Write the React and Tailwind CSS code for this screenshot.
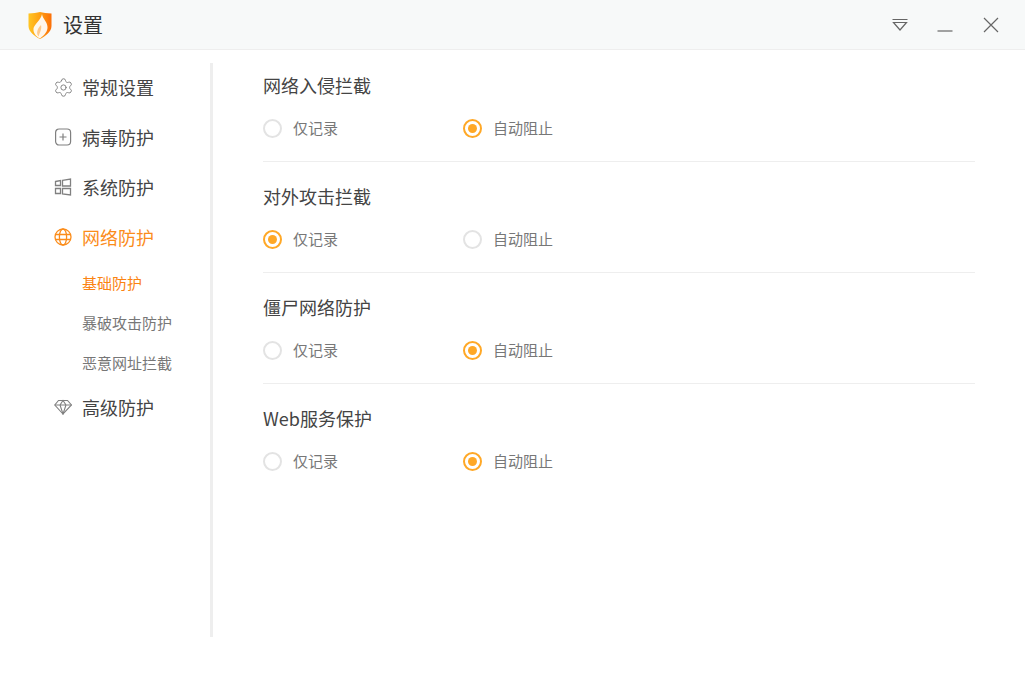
import { Settings } from "lucide-react";

const sections = [
  { title: "网络入侵拦截", value: "block" },
  { title: "对外攻击拦截", value: "log" },
  { title: "僵尸网络防护", value: "block" },
  { title: "Web服务保护", value: "block" },
];

function Logo() {
  return (
    <svg width="24" height="28" viewBox="0 0 24 28">
      <defs>
        <linearGradient id="shield" x1="0" y1="0" x2="1" y2="0">
          <stop offset="0" stopColor="#ffc625" />
          <stop offset="0.5" stopColor="#ff9f12" />
          <stop offset="1" stopColor="#fb6f08" />
        </linearGradient>
      </defs>
      <path d="M0.500 2.500 C5 2.500 9 1.500 12 1 C15 1.500 19 2.500 23.500 2.500 V15 C23.500 21 17 25.500 12 28 C7 25.500 0.500 21 0.500 15 Z" fill="url(#shield)" />
      <path d="M14 3 C14.500 8 20 11 19.500 17 C19 22 15 25 12 27.500 C8 25.500 5 22 5.500 17.500 C6 13.500 13 9 14 3 Z" fill="#fff" opacity="0.92" />
      <path d="M13 14 C14 18 12 21 10.500 25.500 C8 22.500 9 18 13 14 Z" fill="#ffc98a" />
    </svg>
  );
}

function PlusBoxIcon() {
  return (
    <svg width="18" height="18" viewBox="0 0 18 18" fill="none" stroke="#808080" strokeWidth="1.2">
      <rect x="1.600" y="1" width="15" height="16" rx="3.500" />
      <path d="M9 5.500v7M5.500 9h7" />
    </svg>
  );
}

function BlocksIcon() {
  return (
    <svg width="18" height="18" viewBox="0 0 18 18" fill="none" stroke="#808080" strokeWidth="1.300">
      <path d="M1.500 3.500l5-1v5h-5z" />
      <path d="M8.500 2.300l8-1.300v7h-8z" />
      <path d="M1.500 10.500h5v5h-5z" />
      <path d="M8.500 10.500h8v6.500l-8-1z" />
    </svg>
  );
}

function GlobeIcon() {
  return (
    <svg width="18" height="18" viewBox="0 0 18 18" fill="none" stroke="#fb8c1a" strokeWidth="1.300">
      <circle cx="9" cy="9" r="8" />
      <ellipse cx="9" cy="9" rx="3.600" ry="8" />
      <path d="M1.500 6.500h15M1.500 11.500h15" />
    </svg>
  );
}

function DiamondIcon() {
  return (
    <svg width="18" height="16" viewBox="0 0 18 16" fill="none" stroke="#808080" strokeWidth="1.100">
      <path d="M4.500 1.500h9l4 4.500L9 15 .8 6z" />
      <path d="M.8 6h16.700M6 6l3 9 3-9M6 6l3-4.500 3 4.500" />
    </svg>
  );
}

function NavItem({ icon, label, active }) {
  return (
    <div className="flex h-[50px] items-center pb-[2px]">
      <div className="flex w-[20px] justify-center">{icon}</div>
      <span className={`ml-[9px] text-[18px] ${active ? "text-[#fb8c1a]" : "text-[#444]"}`}>{label}</span>
    </div>
  );
}

function Radio({ label, checked }) {
  return (
    <div className="flex w-[200px] items-center">
      <span
        className={`flex h-[19px] w-[19px] items-center justify-center rounded-full border-2 ${
          checked ? "border-[#ffa826]" : "border-[#e3e3e3]"
        }`}
      >
        {checked && <span className="h-[9px] w-[9px] rounded-full bg-[#ffa826]" />}
      </span>
      <span className="ml-[11px] text-[15px] text-[#777]">{label}</span>
    </div>
  );
}

export default function App() {
  return (
    <div className="h-[675px] w-[1025px] overflow-hidden bg-white font-['Noto_Sans_CJK_SC','Noto_Sans',sans-serif]">
      {/* Title bar */}
      <div className="flex h-[50px] items-center border-b border-[#eeeeee] bg-[#f7f9f9] pl-[28px] pr-[26px]">
        <Logo />
        <span className="ml-[11px] pt-[1px] text-[20px] text-[#333]">设置</span>
        <div className="ml-auto flex items-center">
          <svg width="16" height="14" viewBox="0 0 16 14" fill="none" stroke="#666" strokeWidth="1.2">
            <path d="M0.500 1.500h15M1.500 4.500h13L8 12z" />
          </svg>
          <svg className="ml-[29px] mt-[10px]" width="16" height="6" viewBox="0 0 16 6" fill="none" stroke="#666" strokeWidth="1.2">
            <path d="M0.500 4h15" />
          </svg>
          <svg className="ml-[30px]" width="16" height="16" viewBox="0 0 16 16" fill="none" stroke="#666" strokeWidth="1.2">
            <path d="M1 1l14 14M15 1L1 15" />
          </svg>
        </div>
      </div>

      <div className="flex">
        {/* Sidebar */}
        <div className="mt-[13px] h-[574px] w-[213px] border-r-[3px] border-[#eeeeee] pl-[53px]">
          <NavItem icon={<Settings className="shrink-0" size={21} strokeWidth={1.1} color="#808080" />} label="常规设置" />
          <NavItem icon={<PlusBoxIcon />} label="病毒防护" />
          <NavItem icon={<BlocksIcon />} label="系统防护" />
          <NavItem icon={<GlobeIcon />} label="网络防护" active />
          <div className="pl-[29px]">
            <div className="flex h-[40px] items-center text-[15px] text-[#fb8312]">基础防护</div>
            <div className="flex h-[40px] items-center text-[15px] text-[#777]">暴破攻击防护</div>
            <div className="flex h-[40px] items-center text-[15px] text-[#777]">恶意网址拦截</div>
          </div>
          <NavItem icon={<DiamondIcon />} label="高级防护" />
        </div>

        {/* Content */}
        <div className="ml-[50px] mt-[1px] w-[712px]">
          {sections.map((s, i) => (
            <div key={s.title} className={`h-[111px] pt-[11px] ${i < sections.length - 1 ? "border-b border-[#eeeeee]" : ""}`}>
              <div className="flex h-[46px] items-center text-[18px] text-[#444]">{s.title}</div>
              <div className="mt-[8px] flex h-[24px] items-center">
                <Radio label="仅记录" checked={s.value === "log"} />
                <Radio label="自动阻止" checked={s.value === "block"} />
              </div>
            </div>
          ))}
        </div>
      </div>
    </div>
  );
}
